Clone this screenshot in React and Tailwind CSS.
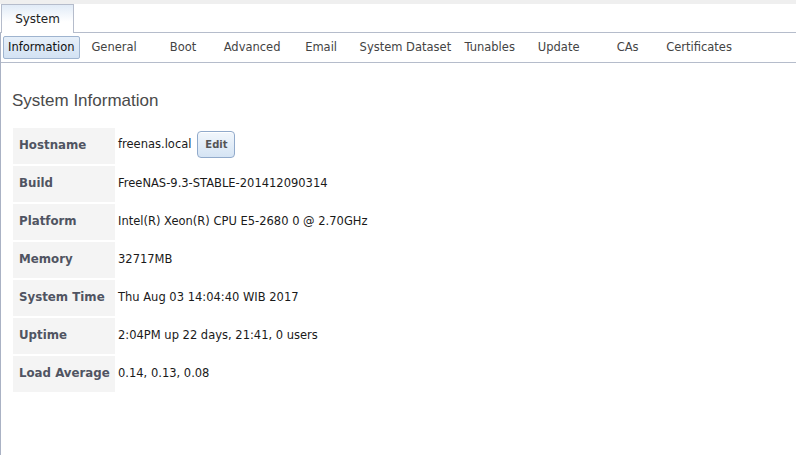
import React from "react";

const tabs = [
  "Information",
  "General",
  "Boot",
  "Advanced",
  "Email",
  "System Dataset",
  "Tunables",
  "Update",
  "CAs",
  "Certificates",
];

const rows = [
  ["Hostname", "freenas.local"],
  ["Build", "FreeNAS-9.3-STABLE-201412090314"],
  ["Platform", "Intel(R) Xeon(R) CPU E5-2680 0 @ 2.70GHz"],
  ["Memory", "32717MB"],
  ["System Time", "Thu Aug 03 14:04:40 WIB 2017"],
  ["Uptime", "2:04PM up 22 days, 21:41, 0 users"],
  ["Load Average", "0.14, 0.13, 0.08"],
];

export default function App() {
  return (
    <div
      className="w-[796px] h-[455px] bg-white overflow-hidden flex flex-col"
      style={{ fontFamily: '"DejaVu Sans", Verdana, sans-serif' }}
    >
      <div className="h-[4px] bg-[#efefef] shrink-0" />
      {/* top tab strip */}
      <div className="h-[29px] flex items-end border-b border-[#b5bccb] shrink-0">
        <div className="ml-px w-[73px] h-[29px] -mb-px border border-b-0 border-[#b5bccb] bg-gradient-to-b from-[#e1ebf7] to-white to-60% flex items-center justify-center text-[12px] text-[#222] bg-white">
          <span className="bg-transparent">System</span>
        </div>
      </div>
      <div className="flex-1 flex flex-col border-l border-[#aab2c4]">
        {/* sub tabs */}
        <div className="h-[30px] flex items-center border-b border-[#b5bccb] pl-[2px] shrink-0">
          {tabs.map((t, i) =>
            i === 0 ? (
              <div
                key={t}
                className="h-[23px] px-[4px] min-w-[69px] flex items-center justify-center rounded-[2px] border border-[#9fb4cf] bg-gradient-to-b from-[#e6eff9] to-[#d3e2f3] text-[11.5px] text-[#111]"
              >
                {t}
              </div>
            ) : (
              <div
                key={t}
                className="h-[23px] px-[4px] min-w-[69px] flex items-center justify-center text-[11.5px] text-[#444]"
              >
                {t}
              </div>
            )
          )}
        </div>
        {/* content */}
        <div className="pl-[10px] pt-[28px]">
          <h2
            className="text-[17px] text-[#4a4a4a] leading-[20px] ml-px"
            style={{ fontFamily: '"Liberation Sans", Arial, sans-serif' }}
          >
            System Information
          </h2>
          <table className="mt-[15px] border-separate border-spacing-[2px]">
            <tbody>
              {rows.map(([k, v]) => (
                <tr key={k}>
                  <td className="w-[102px] h-[36px] bg-[#f4f4f4] pl-[6px] pr-[4px] text-[11.8px] font-bold text-[#505462] whitespace-nowrap align-middle">
                    {k}
                  </td>
                  <td className="pl-[1px] text-[11.5px] text-[#1a1a1a] align-middle whitespace-nowrap">
                    {k === "Hostname" ? (
                      <div className="flex items-center">
                        <span className="-mt-[2px]">{v}</span>
                        <button className="ml-[6px] -mt-[3px] w-[38px] h-[27px] rounded-[4px] border border-[#91aacb] bg-gradient-to-b from-[#f2f7fc] to-[#d5e4f4] text-[10px] font-bold text-[#555] shadow-[inset_0_1px_0_#fff]">
                          Edit
                        </button>
                      </div>
                    ) : (
                      v
                    )}
                  </td>
                </tr>
              ))}
            </tbody>
          </table>
        </div>
      </div>
    </div>
  );
}
